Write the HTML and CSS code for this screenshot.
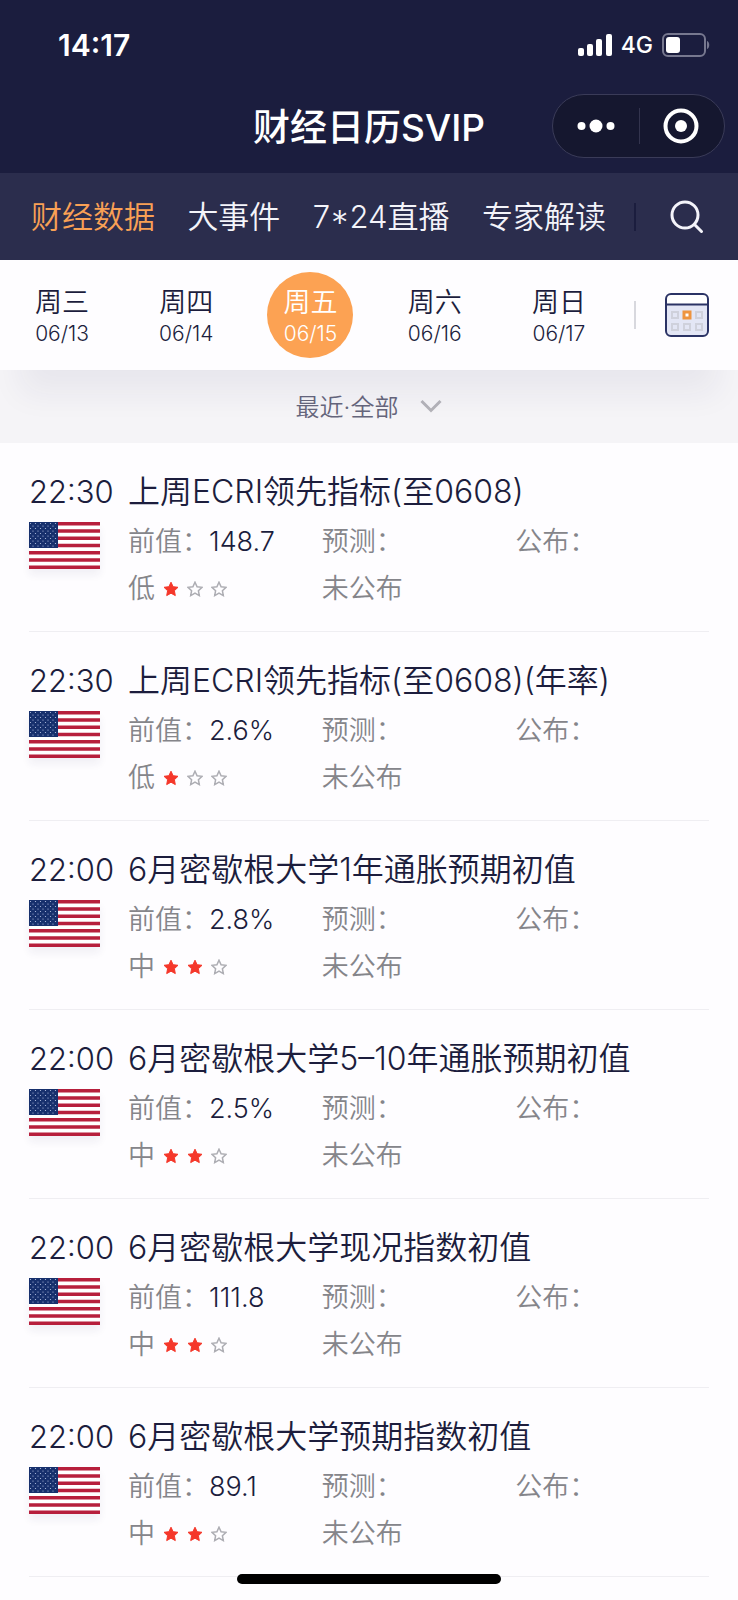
FILE: index.html
```html
<!DOCTYPE html>
<html lang="zh-CN">
<head>
    <meta charset="UTF-8">
    <meta name="viewport" content="width=device-width, initial-scale=1.0">
    <title>财经日历SVIP</title>
    <link rel="stylesheet" href="styles.css">
</head>
<body>
    <!-- Shared icons -->
    <svg class="sprite" aria-hidden="true">
        <defs>
            <pattern id="dots" width="5" height="5" patternUnits="userSpaceOnUse">
                <circle cx="1.5" cy="1.5" r="0.6" fill="#b9c6e6"/>
                <circle cx="4" cy="4" r="0.6" fill="#b9c6e6"/>
            </pattern>
        </defs>
        <symbol id="flag-us" viewBox="0 0 71 47">
            <rect width="71" height="47" fill="#fff"/>
            <path d="M0 1.8h71M0 9h71M0 16.3h71M0 23.5h71M0 30.7h71M0 38h71M0 45.2h71" stroke="#b71f3c" stroke-width="3.4"/>
            <rect width="29" height="26" fill="#17306d"/>
            <rect x="1" y="1" width="27" height="24" fill="url(#dots)"/>
        </symbol>
        <symbol id="star" viewBox="0 0 16 16">
            <path d="M8 1.2l2.1 4.5 4.9.6-3.6 3.4.9 4.9L8 12.2l-4.3 2.4.9-4.9L1 6.3l4.900-.6z"/>
        </symbol>
    </svg>

    <header class="header">
        <div class="status-bar">
            <span class="clock">14:17</span>
            <div class="status-icons">
                <svg width="34" height="22" viewBox="0 0 34 22" fill="#fff">
                    <rect x="0" y="14" width="6" height="8" rx="2"/>
                    <rect x="9" y="10" width="6" height="12" rx="2"/>
                    <rect x="18" y="5" width="6" height="17" rx="2"/>
                    <rect x="28" y="0" width="6" height="22" rx="2"/>
                </svg>
                <span class="network">4G</span>
                <svg width="48" height="24" viewBox="0 0 48 24">
                    <rect x="1" y="1" width="42" height="22" rx="5" fill="none" stroke="#77788f" stroke-width="2"/>
                    <rect x="4" y="4" width="14" height="16" rx="3" fill="#fff"/>
                    <path d="M45 8c3 1 3 7 0 8z" fill="#77788f"/>
                </svg>
            </div>
        </div>
        <div class="title-bar">
            <h1>财经日历SVIP</h1>
            <div class="capsule">
                <button type="button" aria-label="更多">
                    <svg width="38" height="14" viewBox="0 0 38 14" fill="#fff">
                        <circle cx="4.500" cy="7" r="4"/>
                        <circle cx="19" cy="7" r="6.500"/>
                        <circle cx="33.500" cy="7" r="4"/>
                    </svg>
                </button>
                <button type="button" aria-label="关闭">
                    <svg width="36" height="36" viewBox="0 0 36 36">
                        <circle cx="18" cy="18" r="15.500" fill="none" stroke="#fff" stroke-width="4"/>
                        <circle cx="18" cy="18" r="6" fill="#fff"/>
                    </svg>
                </button>
            </div>
        </div>
    </header>

    <nav class="tabs">
        <div class="tab-links">
            <a href="#data" class="active">财经数据</a>
            <a href="#events">大事件</a>
            <a href="#live">7*24直播</a>
            <a href="#experts">专家解读</a>
        </div>
        <button type="button" class="side-btn" aria-label="搜索">
            <svg width="34" height="34" viewBox="0 0 34 34" fill="none" stroke="#f4f4fa" stroke-width="3" stroke-linecap="round">
                <circle cx="15" cy="15" r="13"/>
                <path d="M24.500 24.500l7 7"/>
            </svg>
        </button>
    </nav>

    <div class="dates">
        <div class="days">
            <button type="button" class="day"><span>周三</span><small>06/13</small></button>
            <button type="button" class="day"><span>周四</span><small>06/14</small></button>
            <button type="button" class="day selected"><span>周五</span><small>06/15</small></button>
            <button type="button" class="day"><span>周六</span><small>06/16</small></button>
            <button type="button" class="day"><span>周日</span><small>06/17</small></button>
        </div>
        <button type="button" class="side-btn" aria-label="选择日期">
            <svg width="44" height="44" viewBox="0 0 44 44" fill="none">
                <rect x="1" y="1" width="42" height="42" rx="5" fill="#e3e6f5"/>
                <path d="M1 11.500V6q0-5 5-5h32q5 0 5 5v5.500z" fill="#fff"/>
                <rect x="1" y="1" width="42" height="42" rx="5" stroke="#2b3365" stroke-width="2"/>
                <path d="M1 11.500h42" stroke="#2b3365" stroke-width="2"/>
                <g stroke="#cfd1dc" stroke-width="2">
                    <rect x="7" y="19" width="6" height="6"/>
                    <rect x="31" y="19" width="6" height="6"/>
                    <rect x="7" y="31" width="6" height="6"/>
                    <rect x="19" y="31" width="6" height="6"/>
                    <rect x="31" y="31" width="6" height="6"/>
                </g>
                <rect x="19" y="19" width="6" height="6" fill="#fff" stroke="#ee9440" stroke-width="3"/>
            </svg>
        </button>
    </div>

    <button type="button" class="filter">
        <span>最近·全部</span>
        <svg width="22" height="14" viewBox="0 0 22 14" fill="none" stroke="#b4b3b9" stroke-width="3">
            <path d="M1.500 2L11 11.500 20.500 2"/>
        </svg>
    </button>

    <main class="list">
        <article class="item">
            <div class="when">
                <time>22:30</time>
                <svg class="flag" role="img" aria-label="美国"><use href="#flag-us"/></svg>
            </div>
            <div class="info">
                <h2>上周ECRI领先指标(至0608)</h2>
                <div class="fields">
                    <span>前值：<b>148.7</b></span><span>预测：</span><span>公布：</span>
                    <span class="level">低<svg class="star on"><use href="#star"/></svg><svg class="star"><use href="#star"/></svg><svg class="star"><use href="#star"/></svg></span>
                    <span>未公布</span>
                </div>
            </div>
        </article>
        <article class="item">
            <div class="when">
                <time>22:30</time>
                <svg class="flag" role="img" aria-label="美国"><use href="#flag-us"/></svg>
            </div>
            <div class="info">
                <h2>上周ECRI领先指标(至0608)(年率)</h2>
                <div class="fields">
                    <span>前值：<b>2.6%</b></span><span>预测：</span><span>公布：</span>
                    <span class="level">低<svg class="star on"><use href="#star"/></svg><svg class="star"><use href="#star"/></svg><svg class="star"><use href="#star"/></svg></span>
                    <span>未公布</span>
                </div>
            </div>
        </article>
        <article class="item">
            <div class="when">
                <time>22:00</time>
                <svg class="flag" role="img" aria-label="美国"><use href="#flag-us"/></svg>
            </div>
            <div class="info">
                <h2>6月密歇根大学1年通胀预期初值</h2>
                <div class="fields">
                    <span>前值：<b>2.8%</b></span><span>预测：</span><span>公布：</span>
                    <span class="level">中<svg class="star on"><use href="#star"/></svg><svg class="star on"><use href="#star"/></svg><svg class="star"><use href="#star"/></svg></span>
                    <span>未公布</span>
                </div>
            </div>
        </article>
        <article class="item">
            <div class="when">
                <time>22:00</time>
                <svg class="flag" role="img" aria-label="美国"><use href="#flag-us"/></svg>
            </div>
            <div class="info">
                <h2>6月密歇根大学5–10年通胀预期初值</h2>
                <div class="fields">
                    <span>前值：<b>2.5%</b></span><span>预测：</span><span>公布：</span>
                    <span class="level">中<svg class="star on"><use href="#star"/></svg><svg class="star on"><use href="#star"/></svg><svg class="star"><use href="#star"/></svg></span>
                    <span>未公布</span>
                </div>
            </div>
        </article>
        <article class="item">
            <div class="when">
                <time>22:00</time>
                <svg class="flag" role="img" aria-label="美国"><use href="#flag-us"/></svg>
            </div>
            <div class="info">
                <h2>6月密歇根大学现况指数初值</h2>
                <div class="fields">
                    <span>前值：<b>111.8</b></span><span>预测：</span><span>公布：</span>
                    <span class="level">中<svg class="star on"><use href="#star"/></svg><svg class="star on"><use href="#star"/></svg><svg class="star"><use href="#star"/></svg></span>
                    <span>未公布</span>
                </div>
            </div>
        </article>
        <article class="item">
            <div class="when">
                <time>22:00</time>
                <svg class="flag" role="img" aria-label="美国"><use href="#flag-us"/></svg>
            </div>
            <div class="info">
                <h2>6月密歇根大学预期指数初值</h2>
                <div class="fields">
                    <span>前值：<b>89.1</b></span><span>预测：</span><span>公布：</span>
                    <span class="level">中<svg class="star on"><use href="#star"/></svg><svg class="star on"><use href="#star"/></svg><svg class="star"><use href="#star"/></svg></span>
                    <span>未公布</span>
                </div>
            </div>
        </article>
    </main>

    <div class="home-bar"></div>
</body>
</html>
```
FILE: styles.css
```css
* {
    margin: 0;
    padding: 0;
    box-sizing: border-box;
}

body {
    font-family: Inter, "Noto Sans CJK SC", sans-serif;
    font-weight: 350;
    color: #1c1d3d;
    background: #fefdff;
}

button {
    font: inherit;
    color: inherit;
    background: none;
    border: none;
    cursor: pointer;
}

a {
    color: inherit;
    text-decoration: none;
}

svg {
    display: block;
    flex: none;
}

.sprite {
    position: absolute;
    width: 0;
    height: 0;
}

/* Header */
.header {
    background: #1b1d3e;
    color: #fff;
}

.status-bar {
    display: flex;
    justify-content: space-between;
    align-items: center;
    height: 78px;
    padding: 12px 28px 0 58px;
}

.clock {
    font-size: 30px;
    font-weight: 600;
}

.status-icons {
    display: flex;
    align-items: center;
    gap: 9px;
}

.network {
    font-size: 23px;
    font-weight: 500;
}

.title-bar {
    display: grid;
    grid-template-columns: 1fr auto 1fr;
    align-items: center;
    height: 95px;
    padding: 0 13px;
}

.title-bar h1 {
    grid-column: 2;
    padding-bottom: 2px;
    font-size: 37px;
    font-weight: 500;
}

.capsule {
    display: flex;
    justify-self: end;
    width: 173px;
    height: 64px;
    border: 1px solid #3a3b58;
    border-radius: 32px;
    background: #15172f;
}

.capsule button {
    flex: 1;
    display: flex;
    align-items: center;
    justify-content: center;
    position: relative;
}

.capsule button + button::before {
    content: "";
    position: absolute;
    left: 0;
    top: 13px;
    bottom: 13px;
    border-left: 1px solid #33344e;
}

/* Tabs */
.tabs {
    display: flex;
    height: 87px;
    background: #2b2d4d;
    color: #f4f4fa;
}

.tab-links {
    flex: 1;
    display: flex;
    align-items: center;
    justify-content: space-between;
    padding: 0 28px 4px 31px;
    font-size: 31px;
}

.tabs .active {
    color: #f9a055;
}

.side-btn {
    position: relative;
    display: flex;
    align-items: center;
    justify-content: center;
    width: 104px;
    padding-left: 2px;
}

.side-btn::before {
    content: "";
    position: absolute;
    left: 0;
    height: 28px;
    border-left: 2px solid #d8d8de;
}

.tabs .side-btn::before {
    border-color: #1b1d3e;
}

/* Date strip */
.dates {
    position: relative;
    display: flex;
    height: 110px;
    background: #fefdff;
    box-shadow: 0 44px 32px -20px rgba(40, 35, 80, 0.06);
}

.days {
    flex: 1;
    display: grid;
    grid-template-columns: repeat(5, 1fr);
    justify-items: center;
    align-items: center;
    padding-right: 13px;
}

.day {
    display: flex;
    flex-direction: column;
    align-items: center;
    justify-content: center;
    width: 86px;
    height: 86px;
    padding-top: 4px;
    border-radius: 50%;
}

.day span {
    font-size: 27px;
    line-height: 34px;
}

.day small {
    font-size: 21px;
    line-height: 28px;
}

.day.selected {
    background: #fca253;
    color: #fff;
}

/* Filter */
.filter {
    display: flex;
    align-items: center;
    justify-content: center;
    gap: 22px;
    width: 100%;
    height: 73px;
    padding-bottom: 2px;
    background: #f5f4f7;
    color: #66667c;
    font-size: 24px;
}

/* Data list */
.list {
    padding: 0 29px 23px;
}

.item {
    display: flex;
    gap: 15px;
    padding: 25px 0 19px;
    border-bottom: 1px solid #efeef2;
}

.when {
    width: 84px;
}

.when time {
    display: block;
    font-size: 31px;
    line-height: 48px;
}

.flag {
    width: 71px;
    height: 47px;
    margin-top: 6px;
    box-shadow: 0 6px 8px rgba(40, 40, 80, 0.06);
}

.info {
    flex: 1;
}

.info h2 {
    font-size: 32px;
    font-weight: 350;
    line-height: 48px;
}

.fields {
    display: grid;
    grid-template-columns: repeat(3, 1fr);
    margin-top: 2px;
    font-size: 27px;
    line-height: 47px;
    color: #85858a;
}

.fields b {
    font-weight: 350;
    color: #1c1d3d;
}

.level {
    display: flex;
    align-items: center;
    gap: 8px;
}

.star {
    width: 16px;
    height: 16px;
    fill: none;
    stroke: #adadb3;
    stroke-width: 1.5;
}

.star.on {
    fill: #f5372a;
    stroke: #f5372a;
    stroke-width: 1;
}

.home-bar {
    position: fixed;
    left: 50%;
    bottom: 16px;
    width: 264px;
    height: 10px;
    border-radius: 5px;
    background: #000;
    transform: translateX(-50%);
}
```
